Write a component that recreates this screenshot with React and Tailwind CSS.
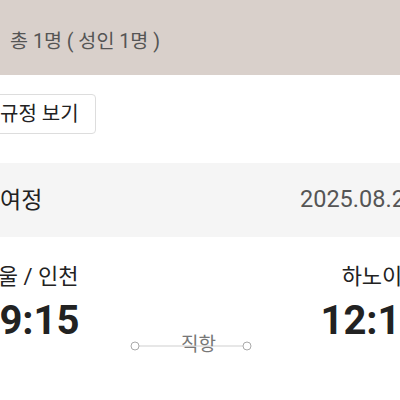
export default function App() {
  const font = { fontFamily: "Roboto, 'Noto Sans CJK KR', sans-serif" };
  return (
    <div className="w-[400px] h-[400px] overflow-hidden bg-white text-[#222]" style={font}>
      <div className="h-[75px] bg-[#d9d0cb] flex items-center pl-[10px] pt-[8px]">
        <span className="text-[19.6px] text-[#555] leading-none whitespace-nowrap">총 1명 ( 성인 1명 )</span>
      </div>

      <div className="pt-[19px] pb-[29px]">
        <button className="-ml-[12px] h-[40px] pl-[11px] pr-[16px] border border-[#ddd] rounded-[4px] bg-white text-[20px] leading-none text-[#222]">
          규정 보기
        </button>
      </div>

      <div className="h-[74px] bg-[#f5f5f5] flex items-center">
        <span className="text-[23px] leading-none">여정</span>
        <span className="ml-auto w-[100px] text-[23.5px] leading-none text-[#555] whitespace-nowrap">2025.08.21</span>
      </div>

      <div className="flex pt-[29px] -mx-[32px]">
        <div className="w-[120px] flex flex-col items-center shrink-0">
          <span className="text-[22px] leading-none whitespace-nowrap">서울 / 인천</span>
          <span className="mt-[13px] text-[40px] font-bold leading-none whitespace-nowrap">09:15</span>
        </div>
        <div className="flex-1">
          <div className="relative ml-[42px] mt-[70px] w-[122px] h-[20px]">
            <svg className="absolute left-0 top-[5px]" width="122" height="10" viewBox="0 0 122 10">
              <line x1="9" y1="5" x2="113" y2="5" stroke="#cfcfcf" strokeWidth="1.2" />
              <circle cx="5" cy="5" r="4" fill="#fff" stroke="#aaa" strokeWidth="1" />
              <circle cx="117" cy="5" r="4" fill="#fff" stroke="#aaa" strokeWidth="1" />
            </svg>
            <span className="absolute left-[51px] top-[-1px] text-[19px] leading-none text-[#777] whitespace-nowrap">직항</span>
          </div>
        </div>
        <div className="w-[120px] flex flex-col items-center shrink-0">
          <span className="text-[22px] leading-none whitespace-nowrap">하노이</span>
          <span className="mt-[13px] text-[40px] font-bold leading-none whitespace-nowrap">12:15</span>
        </div>
      </div>
    </div>
  );
}
